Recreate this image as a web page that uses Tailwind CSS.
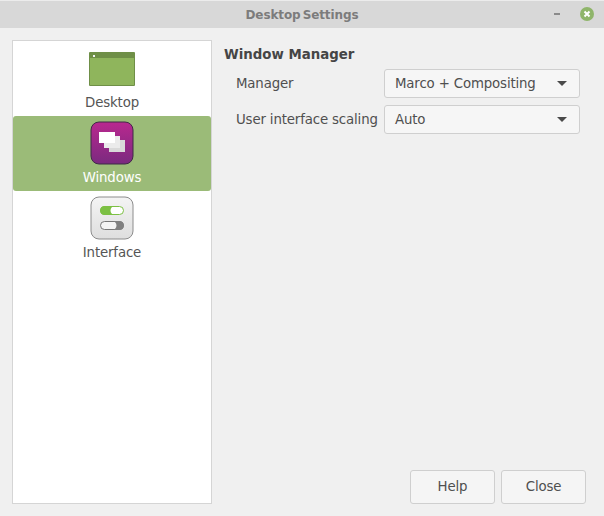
<!DOCTYPE html>
<html lang="en">
<head>
    <meta charset="UTF-8">
    <title>Desktop Settings</title>
    <script src="https://cdn.jsdelivr.net/npm/@tailwindcss/browser@4"></script>
</head>
<body class="w-[604px] h-[516px] overflow-hidden bg-[#f0f0f0] font-['DejaVu_Sans',sans-serif] text-[13.33px] tracking-[-0.15px] text-[#4f4f4f]">
    <!-- title bar -->
    <div class="h-[28px] bg-[#d8d8d8] border-t border-[#ececec] relative flex items-center justify-center">
        <span class="text-[12px] font-bold tracking-[-0.1px] text-[#7c7c7c] [word-spacing:-2px] pt-[1px]">Desktop Settings</span>
        <div class="absolute right-[10px] top-[6px] flex items-center gap-[20px]">
            <div class="w-[6px] h-[2px] bg-[#8a8a8a]"></div>
            <svg width="14" height="14" viewBox="0 0 14 14">
                <circle cx="7" cy="7" r="7" fill="#8fb56a"/>
                <path d="M4.5 4.5l5 5M9.5 4.5l-5 5" stroke="#fff" stroke-width="2"/>
            </svg>
        </div>
    </div>
    <div class="flex h-[488px] pt-[12px] pb-[12px] pl-[12px]">
        <!-- sidebar -->
        <div class="w-[200px] h-[464px] bg-white border border-[#d5d5d5] flex flex-col shrink-0">
            <div class="h-[75px] flex flex-col items-center pt-[11px]">
                <svg width="46" height="34" viewBox="0 0 46 34">
                    <rect x="0" y="0" width="46" height="34" rx="1" fill="#6f8f47"/>
                    <rect x="1" y="6" width="44" height="27" fill="#8fb55c"/>
                    <rect x="4" y="3" width="2" height="2" fill="#f2f2f2"/>
                </svg>
                <span class="mt-[7px] leading-[20px] text-[#555]">Desktop</span>
            </div>
            <div class="h-[75px] bg-[#9bbb78] rounded-[3px] flex flex-col items-center pt-[5px] text-white">
                <svg width="44" height="44" viewBox="0 0 44 44">
                    <defs>
                        <linearGradient id="wingrad" x1="0" y1="0" x2="0" y2="1">
                            <stop offset="0" stop-color="#b9288f"/>
                            <stop offset="1" stop-color="#7a2a7f"/>
                        </linearGradient>
                    </defs>
                    <rect x="1" y="1" width="42" height="42" rx="8" fill="url(#wingrad)" stroke="#3f2a46"/>
                    <rect x="19" y="19" width="16" height="12" fill="#d9d9d9"/>
                    <rect x="14" y="15" width="16" height="12" fill="#ebebeb"/>
                    <rect x="9" y="11" width="16" height="11" fill="#fff"/>
                </svg>
                <span class="mt-[3px] leading-[20px]">Windows</span>
            </div>
            <div class="h-[75px] flex flex-col items-center pt-[5px]">
                <svg width="44" height="44" viewBox="0 0 44 44">
                    <defs>
                        <linearGradient id="ifgrad" x1="0" y1="0" x2="0" y2="1">
                            <stop offset="0" stop-color="#f4f4f4"/>
                            <stop offset="1" stop-color="#dedede"/>
                        </linearGradient>
                    </defs>
                    <rect x="1" y="1" width="42" height="42" rx="8" fill="url(#ifgrad)" stroke="#8c8c8c"/>
                    <rect x="10.5" y="10.5" width="23" height="8" rx="4" fill="#fff" stroke="#7cc043"/>
                    <path d="M14.5 10H25a4.5 4.5 0 0 0 0 9H14.5a4.5 4.5 0 0 1 0-9z" fill="#7cc043"/>
                    <rect x="10.5" y="25.5" width="23" height="8" rx="4" fill="#f4f4f4" stroke="#777"/>
                    <path d="M22 25h7.5a4.5 4.5 0 0 1 0 9H22a4.5 4.5 0 0 0 0-9z" fill="#808080"/>
                </svg>
                <span class="mt-[3px] leading-[20px] text-[#555]">Interface</span>
            </div>
        </div>
        <!-- content -->
        <div class="flex-1 flex flex-col pl-[12px]">
            <h2 class="text-[13.33px] tracking-normal font-bold leading-[18px] mt-[6px] text-[#454545]">Window Manager</h2>
            <div class="flex items-center mt-[5px] h-[29px] pl-[12px]">
                <span class="w-[148px] shrink-0">Manager</span>
                <div class="w-[196px] h-[29px] bg-[#f6f6f6] border border-[#cfcfcf] rounded-[3px] flex items-center justify-between pl-[10px] pr-[12px]">
                    <span>Marco + Compositing</span>
                    <div class="w-0 h-0 border-x-[5px] border-x-transparent border-t-[5px] border-t-[#4a4a4a]"></div>
                </div>
            </div>
            <div class="flex items-center mt-[7px] h-[29px] pl-[12px]">
                <span class="w-[148px] shrink-0 whitespace-nowrap">User interface scaling</span>
                <div class="w-[196px] h-[29px] bg-[#f6f6f6] border border-[#cfcfcf] rounded-[3px] flex items-center justify-between pl-[10px] pr-[12px]">
                    <span>Auto</span>
                    <div class="w-0 h-0 border-x-[5px] border-x-transparent border-t-[5px] border-t-[#4a4a4a]"></div>
                </div>
            </div>
            <div class="mt-auto flex justify-end gap-[6px] pr-[18px]">
                <button class="w-[85px] h-[34px] bg-[#f5f5f5] border border-[#cfcfcf] rounded-[3px]">Help</button>
                <button class="w-[85px] h-[34px] bg-[#f5f5f5] border border-[#cfcfcf] rounded-[3px]">Close</button>
            </div>
        </div>
    </div>
</body>
</html>
